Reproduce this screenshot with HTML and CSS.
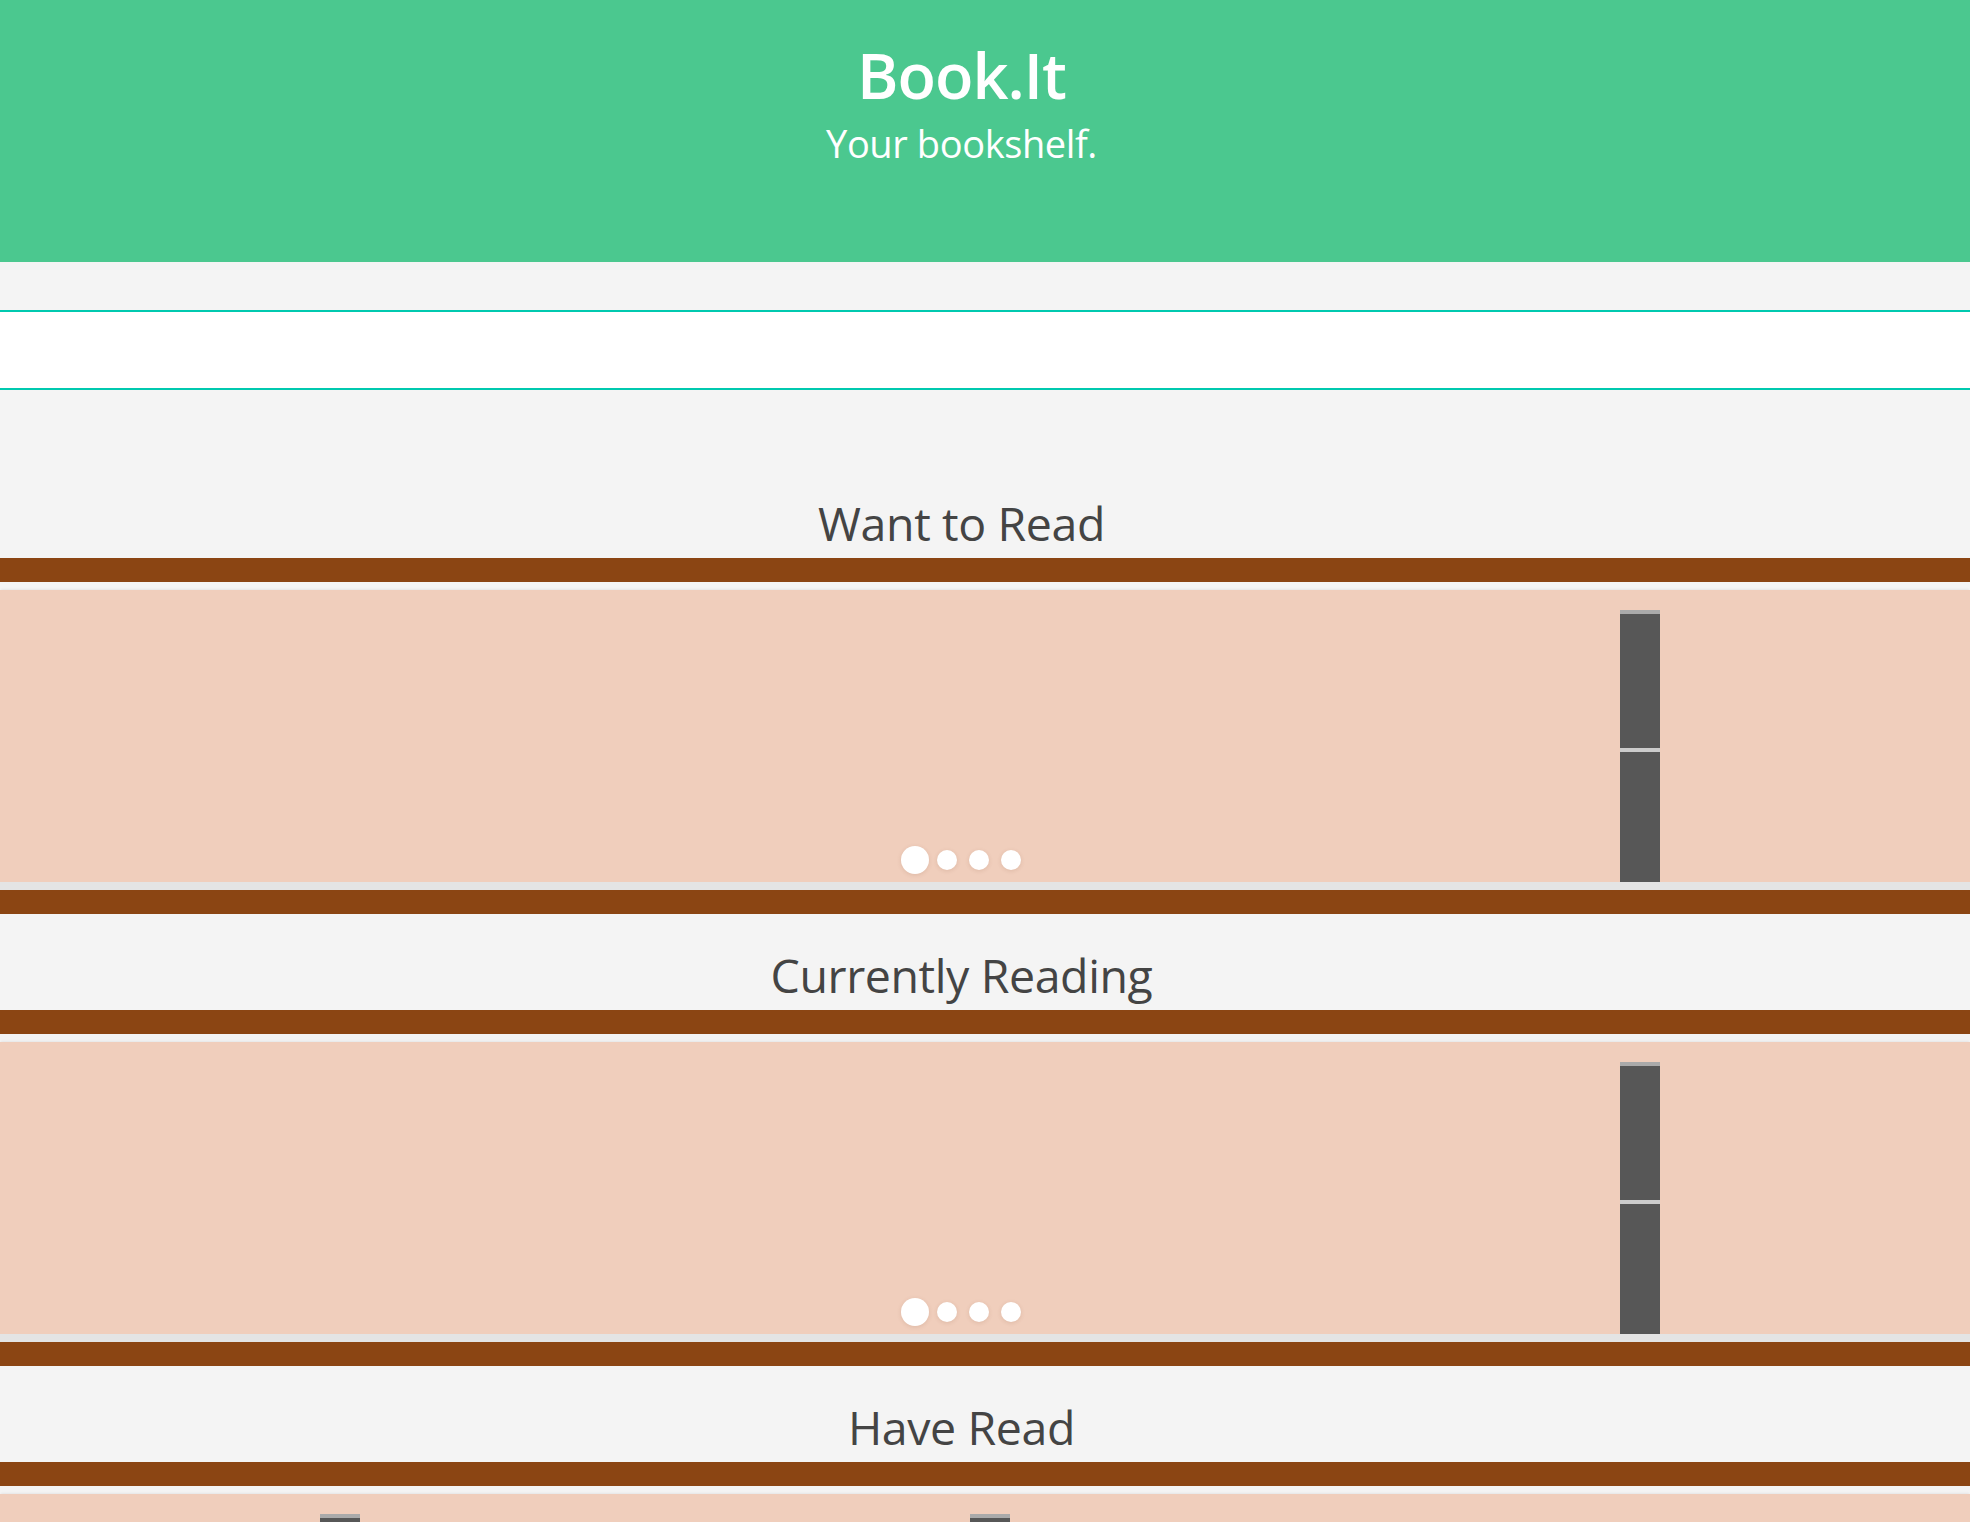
FILE: index.html
```html
<!DOCTYPE html>
<html lang="en">
<head>
<meta charset="utf-8">
<title>Book.It</title>
<link rel="stylesheet" href="styles.css">
</head>
<body>
<header class="hero">
  <h1 class="hero-title">Book.It</h1>
  <p class="hero-sub">Your bookshelf.</p>
</header>
<div class="search-wrap">
  <input class="search" type="text" aria-label="Search">
</div>
<main class="shelves">
  <section class="shelf shelf-first">
    <h2 class="shelf-title">Want to Read</h2>
    <div class="plank"></div>
    <div class="carousel">
      <div class="track">
        <div class="slot"></div>
        <div class="slot"></div>
        <div class="slot"><div class="book"><div class="book-cap"></div><div class="book-top"></div><div class="book-line"></div><div class="book-bottom"></div></div></div>
      </div>
      <ul class="dots">
        <li class="dot-cell"><span class="dot dot-active"></span></li>
        <li class="dot-cell"><span class="dot"></span></li>
        <li class="dot-cell"><span class="dot"></span></li>
        <li class="dot-cell"><span class="dot"></span></li>
      </ul>
    </div>
    <div class="plank plank-bottom"></div>
  </section>
  <section class="shelf">
    <h2 class="shelf-title">Currently Reading</h2>
    <div class="plank"></div>
    <div class="carousel">
      <div class="track">
        <div class="slot"></div>
        <div class="slot"></div>
        <div class="slot"><div class="book"><div class="book-cap"></div><div class="book-top"></div><div class="book-line"></div><div class="book-bottom"></div></div></div>
      </div>
      <ul class="dots">
        <li class="dot-cell"><span class="dot dot-active"></span></li>
        <li class="dot-cell"><span class="dot"></span></li>
        <li class="dot-cell"><span class="dot"></span></li>
        <li class="dot-cell"><span class="dot"></span></li>
      </ul>
    </div>
    <div class="plank plank-bottom"></div>
  </section>
  <section class="shelf">
    <h2 class="shelf-title">Have Read</h2>
    <div class="plank"></div>
    <div class="carousel">
      <div class="track">
        <div class="slot"><div class="book"><div class="book-cap"></div><div class="book-top"></div><div class="book-line"></div><div class="book-bottom"></div></div></div>
        <div class="slot"><div class="book"><div class="book-cap"></div><div class="book-top"></div><div class="book-line"></div><div class="book-bottom"></div></div></div>
        <div class="slot"></div>
      </div>
    </div>
    <div class="plank plank-bottom"></div>
  </section>
</main>
</body>
</html>
```
FILE: styles.css
```css
* { box-sizing: border-box; }
html, body {
  margin: 0;
  padding: 0;
  background: #f4f4f4;
  font-family: "Open Sans", "Noto Sans", sans-serif;
  color: #444;
  overflow-x: hidden;
}
.hero {
  background: #4bc88f;
  height: 262px;
  color: #fff;
  text-align: center;
  padding: 33px 47px 0 0;
}
.hero-title {
  margin: 0;
  font-size: 63px;
  font-weight: 600;
  line-height: 84px;
  letter-spacing: -1px;
}
.hero-sub {
  margin: 0;
  font-size: 38px;
  font-weight: 400;
  line-height: 52px;
  letter-spacing: -0.4px;
}
.search-wrap {
  padding-top: 48px;
}
.search {
  display: block;
  width: 100%;
  height: 80px;
  border: 0;
  border-top: 2px solid #00c9af;
  border-bottom: 2px solid #00c9af;
  background: #fff;
  margin: 0;
  outline: none;
}
.shelf-first { margin-top: 72px; }
.shelf-title {
  margin: 0;
  height: 96px;
  display: flex;
  align-items: flex-end;
  justify-content: center;
  padding: 0 47px 6px 0;
  font-size: 46.5px;
  font-weight: 400;
  line-height: 1.2;
  letter-spacing: -0.4px;
  color: #444;
}
.plank {
  height: 24px;
  background: #8b4513;
  margin-bottom: 8px;
}
.plank-bottom { margin-bottom: 0; margin-top: 0; }
.carousel {
  position: relative;
  height: 292px;
  background: #f0cebc;
  overflow: hidden;
  box-shadow: 0 -2px 2px -1px rgba(0,0,0,0.06);
  margin-bottom: 8px;
}
.shelf .carousel + .plank-bottom {
  box-shadow: 0 -8px 0 0 #e4e4e4;
}
.track {
  display: flex;
  height: 100%;
  padding-top: 20px;
}
.slot {
  flex: 0 0 650px;
  padding-left: 320px;
}
.book {
  width: 40px;
  height: 272px;
  display: flex;
  flex-direction: column;
}
.book-cap { height: 4px; background: #aaaaaa; }
.book-top { height: 134px; background: #575757; }
.book-line { height: 4px; background: #cccccc; }
.book-bottom { flex: 1; background: #575757; }
.dots {
  position: absolute;
  left: 0;
  right: 0;
  bottom: 6px;
  margin: 0;
  padding: 0 45px 0 0;
  list-style: none;
  display: flex;
  justify-content: center;
  align-items: center;
  height: 32px;
}
.dot-cell {
  width: 32px;
  height: 32px;
  display: flex;
  align-items: center;
  justify-content: center;
}
.dot {
  display: block;
  width: 20px;
  height: 20px;
  border-radius: 50%;
  background: #fff;
  box-shadow: 0 1px 4px rgba(120,70,40,0.15);
}
.dot-active {
  width: 28px;
  height: 28px;
}
```
